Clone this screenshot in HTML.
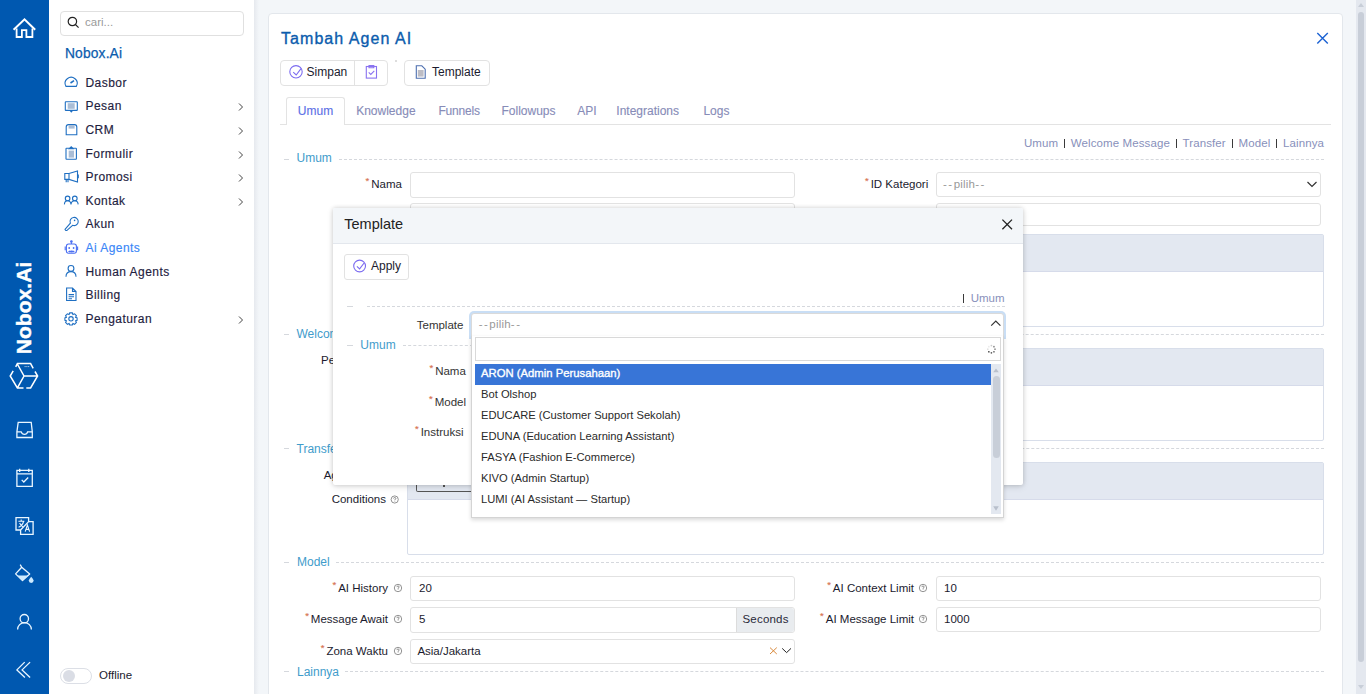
<!DOCTYPE html>
<html><head><meta charset="utf-8">
<style>
*{box-sizing:border-box}
html,body{margin:0;padding:0}
body{width:1366px;height:694px;overflow:hidden;position:relative;background:#f3f6f9;font-family:"Liberation Sans",sans-serif;color:#1e2140}
.a{position:absolute}
.nw{white-space:nowrap}
#bar{left:0;top:0;width:49px;height:694px;background:#0058b0}
#side{left:49px;top:0;width:205px;height:694px;background:#fff}
#shadow{left:254px;top:0;width:5px;height:694px;background:linear-gradient(to right,#e6e9ee,#f3f6f9)}
#sb{left:1356px;top:0;width:10px;height:694px;background:#e4e8ef}
#card{left:268px;top:13px;width:1075px;height:700px;background:#fff;border:1px solid #e3e7ec;border-radius:4px}
.menu{left:85.5px;font-size:12px;letter-spacing:0.45px;color:#1e2140;-webkit-text-stroke:0.15px #1e2140}
.ico{stroke:#1f6fc2;fill:none;stroke-width:1.2}
.chev{left:235px;width:6px;height:6px;border-right:1px solid #555;border-top:1px solid #555;transform:rotate(45deg)}
.lbl{font-size:12px;color:#1b1b2e;text-align:right}
.ast{color:#e07452;font-size:10px}
.inp{background:#fff;border:1px solid #e2e2e2;border-radius:3px}
.legend{font-size:12px;color:#3f9ccb}
.dash{border-top:1px dashed #d5d8dd;height:0}
.tab{font-size:12px;color:#878cb8;-webkit-text-stroke:0.12px #878cb8}
.panel{border:1px solid #d8deea;border-radius:2px;background:#fff}
.phead{background:#e3e8f1;border-bottom:1px solid #d6dbea}
.help{width:9px;height:9px;border:1px solid #777;border-radius:50%;font-size:6px;line-height:7px;text-align:center;color:#777}
.opt{left:481px;font-size:11.2px;color:#2a2a2a}
</style></head><body>
<div id="bar" class="a"></div>
<div id="side" class="a"></div>
<div id="shadow" class="a"></div>
<div id="sb" class="a"></div>
<div id="card" class="a"></div>


<!-- card header -->
<div class="a nw" style="left:281px;top:29.4px;line-height:20px;font-size:16px;letter-spacing:1.05px;color:#0b5cad;-webkit-text-stroke:0.35px #0b5cad">Tambah Agen AI</div>
<svg class="a" style="left:1312px;top:28px" width="22" height="22" viewBox="1312 28 22 22" fill="none" stroke="#1c63d3" stroke-width="1.4"><path d="M1317.3 33.1 L1327.8 43.6 M1327.8 33.1 L1317.3 43.6"/></svg>
<div class="a" style="left:280px;top:60px;width:108px;height:26px;border:1px solid #e2e2e2;border-radius:4px"></div>
<div class="a" style="left:354px;top:61px;width:1px;height:24px;background:#e2e2e2"></div>
<div class="a" style="left:404px;top:60px;width:86px;height:26px;border:1px solid #e2e2e2;border-radius:4px"></div>
<div class="a" style="left:395px;top:60px;width:2px;height:2px;background:#ddd"></div>
<svg class="a" style="left:280px;top:56px" width="220" height="30" viewBox="280 56 220 30" fill="none" stroke-width="1.1">
 <circle cx="296" cy="71.8" r="6.2" stroke="#7c6cf0"/><path d="M293.2 72.2 L296.2 75 L301 68.6" stroke="#7c6cf0"/>
 <rect x="366.3" y="66.5" width="10.2" height="11.6" stroke="#8a73f0"/><path d="M369 66.5 V65.5 H373.8 V66.5 V67.8 H369 Z" stroke="#8a73f0"/><path d="M368.7 72.3 L370.8 74.4 L374.3 70.8" stroke="#8a73f0"/>
 <path d="M416.3 65.8 H421.8 L425.2 69.2 V78.2 H416.3 Z" stroke="#4d6fb0"/><rect x="417.8" y="70" width="5.8" height="6.6" fill="#bcbcc4" stroke="none"/>
</svg>
<div class="a nw" style="left:306.6px;top:62px;line-height:20px;font-size:12px;color:#1b1b2e">Simpan</div>
<div class="a nw" style="left:432px;top:62px;line-height:20px;font-size:12px;color:#1b1b2e">Template</div>

<!-- tabs -->
<div class="a" style="left:280px;top:124px;width:1051px;height:1px;background:#e3e3e3"></div>
<div class="a" style="left:286px;top:97px;width:59px;height:28px;border:1px solid #e3e3e3;border-bottom:none;background:#fff;border-radius:3px 3px 0 0"></div>
<div class="a nw tab" style="left:297.8px;top:101px;line-height:20px;color:#5b6fe6;-webkit-text-stroke:0.12px #5b6fe6">Umum</div>
<div class="a nw tab" style="left:356.2px;top:101px;line-height:20px">Knowledge</div>
<div class="a nw tab" style="left:438.4px;top:101px;line-height:20px;letter-spacing:-0.2px">Funnels</div>
<div class="a nw tab" style="left:501.5px;top:101px;line-height:20px">Followups</div>
<div class="a nw tab" style="left:577.3px;top:101px;line-height:20px">API</div>
<div class="a nw tab" style="left:616.3px;top:101px;line-height:20px">Integrations</div>
<div class="a nw tab" style="left:703.4px;top:101px;line-height:20px">Logs</div>

<!-- anchors -->
<div class="a nw" style="right:42px;top:133.3px;line-height:20px;font-size:11.5px;letter-spacing:0.1px;color:#8890bb">Umum<span style="display:inline-block;width:1.3px;height:9.6px;background:#3a3a3a;margin:0 5.6px 0 5.8px;vertical-align:-1px"></span>Welcome Message<span style="display:inline-block;width:1.3px;height:9.6px;background:#3a3a3a;margin:0 5.6px 0 5.8px;vertical-align:-1px"></span>Transfer<span style="display:inline-block;width:1.3px;height:9.6px;background:#3a3a3a;margin:0 5.6px 0 5.8px;vertical-align:-1px"></span>Model<span style="display:inline-block;width:1.3px;height:9.6px;background:#3a3a3a;margin:0 5.6px 0 5.8px;vertical-align:-1px"></span>Lainnya</div>
<!-- section Umum -->
<div class="a" style="left:284px;top:159px;width:5px;height:1px;background:#d5d8dd"></div>
<div class="a nw legend" style="left:296.5px;top:148.3px;line-height:20px">Umum</div>
<div class="a dash" style="left:339px;top:159px;width:985px"></div>
<div class="a nw" style="right:964px;top:174.2px;line-height:20px;font-size:11.5px;color:#1b1b2e"><span style="color:#d6714f;font-size:9.5px;position:relative;top:-4px;margin-right:2px;-webkit-text-stroke:0.15px #d6714f">*</span>Nama</div><div class="a nw" style="right:437.79999999999995px;top:174.2px;line-height:20px;font-size:11.5px;color:#1b1b2e"><span style="color:#d6714f;font-size:9.5px;position:relative;top:-4px;margin-right:2px;-webkit-text-stroke:0.15px #d6714f">*</span>ID Kategori</div>
<div class="a inp" style="left:410px;top:172px;width:385px;height:26px"></div>
<div class="a inp" style="left:936px;top:172px;width:385px;height:25px"></div>
<div class="a nw" style="left:943px;top:174px;line-height:20px;font-size:11.5px;color:#999;letter-spacing:0.2px"><span style="letter-spacing:1.5px">--</span>pilih<span style="letter-spacing:1.5px">--</span></div>
<svg class="a" style="left:1305px;top:178px" width="14" height="12" viewBox="1305 178 14 12" fill="none" stroke="#333" stroke-width="1.2"><path d="M1307.5 182 L1312 186.5 L1316.5 182"/></svg>
<div class="a inp" style="left:410px;top:203px;width:385px;height:23px"></div>
<div class="a inp" style="left:936px;top:203px;width:385px;height:23px"></div>
<div class="a panel" style="left:407px;top:234px;width:917px;height:93px"></div>
<div class="a phead" style="left:408px;top:235px;width:915px;height:37px"></div>

<!-- Welcome section -->
<div class="a" style="left:284px;top:334px;width:5px;height:1px;background:#d5d8dd"></div>
<div class="a nw legend" style="left:296.5px;top:324px;line-height:20px">Welcome Message</div>
<div class="a dash" style="left:400px;top:334px;width:924px"></div>
<div class="a nw" style="left:321px;top:350px;line-height:20px;font-size:11.5px;color:#1b1b2e">Pesan</div>
<div class="a panel" style="left:407px;top:348px;width:917px;height:93px"></div>
<div class="a phead" style="left:408px;top:349px;width:915px;height:37px"></div>

<!-- Transfer section -->
<div class="a" style="left:284px;top:448px;width:5px;height:1px;background:#d5d8dd"></div>
<div class="a nw legend" style="left:296.5px;top:438.6px;line-height:20px">Transfer</div>
<div class="a dash" style="left:352px;top:448px;width:972px"></div>
<div class="a nw" style="left:323.7px;top:464.8px;line-height:20px;font-size:11.5px;color:#1b1b2e">Agent</div>
<div class="a panel" style="left:407px;top:462px;width:917px;height:93px"></div>
<div class="a phead" style="left:408px;top:463px;width:915px;height:37px"></div>
<div class="a" style="left:416px;top:470px;width:80px;height:21.5px;border:1px solid #555;border-top:none;border-radius:0 0 2px 2px"></div>
<div class="a" style="left:443px;top:485px;width:1.5px;height:1.5px;background:#555"></div>
<div class="a nw" style="right:980px;top:489.1px;line-height:20px;font-size:11.5px;color:#1b1b2e">Conditions</div>
<svg class="a" style="left:390px;top:495px" width="10" height="10" viewBox="0 0 10 10" fill="none" stroke="#777" stroke-width="0.8"><circle cx="4.7" cy="4.5" r="3.6"/><path d="M3.6 3.6 Q3.6 2.5 4.7 2.5 Q5.9 2.5 5.9 3.5 Q5.9 4.3 4.8 4.6 V5.3 M4.8 6.1 V6.6"/></svg>

<!-- Model -->
<div class="a" style="left:284px;top:562px;width:5px;height:1px;background:#d5d8dd"></div>
<div class="a nw legend" style="left:297px;top:552px;line-height:20px">Model</div>
<div class="a dash" style="left:336px;top:562px;width:988px"></div>
<div class="a nw" style="right:978px;top:578.0px;line-height:20px;font-size:11.5px;color:#1b1b2e"><span style="color:#d6714f;font-size:9.5px;position:relative;top:-4px;margin-right:2px;-webkit-text-stroke:0.15px #d6714f">*</span>AI History</div><div class="a nw" style="right:978px;top:608.8px;line-height:20px;font-size:11.5px;color:#1b1b2e"><span style="color:#d6714f;font-size:9.5px;position:relative;top:-4px;margin-right:2px;-webkit-text-stroke:0.15px #d6714f">*</span>Message Await</div><div class="a nw" style="right:978px;top:641.2px;line-height:20px;font-size:11.5px;color:#1b1b2e"><span style="color:#d6714f;font-size:9.5px;position:relative;top:-4px;margin-right:2px;-webkit-text-stroke:0.15px #d6714f">*</span>Zona Waktu</div><div class="a nw" style="right:452px;top:578.0px;line-height:20px;font-size:11.5px;color:#1b1b2e"><span style="color:#d6714f;font-size:9.5px;position:relative;top:-4px;margin-right:2px;-webkit-text-stroke:0.15px #d6714f">*</span>AI Context Limit</div><div class="a nw" style="right:452px;top:608.8px;line-height:20px;font-size:11.5px;color:#1b1b2e"><span style="color:#d6714f;font-size:9.5px;position:relative;top:-4px;margin-right:2px;-webkit-text-stroke:0.15px #d6714f">*</span>AI Message Limit</div>
<div class="a inp" style="left:410px;top:576px;width:385px;height:25px"></div>
<div class="a inp" style="left:410px;top:607px;width:385px;height:26px"></div>
<div class="a" style="left:736px;top:608px;width:58px;height:24px;background:#e9ecef;border-left:1px solid #dcdcdc;border-radius:0 3px 3px 0"></div>
<div class="a nw" style="left:742.5px;top:608.6px;line-height:20px;font-size:11.5px;letter-spacing:0.2px;color:#2a2a3a">Seconds</div>
<div class="a inp" style="left:410px;top:639px;width:385px;height:25px"></div>
<div class="a inp" style="left:936px;top:576px;width:385px;height:25px"></div>
<div class="a inp" style="left:936px;top:607px;width:385px;height:25px"></div>
<div class="a nw" style="left:419px;top:578px;line-height:20px;font-size:11.5px;color:#1b1b2e">20</div>
<div class="a nw" style="left:419px;top:608.6px;line-height:20px;font-size:11.5px;color:#1b1b2e">5</div>
<div class="a nw" style="left:417.4px;top:641.2px;line-height:20px;font-size:11.5px;color:#1b1b2e">Asia/Jakarta</div>
<div class="a nw" style="left:944px;top:578px;line-height:20px;font-size:11.5px;color:#1b1b2e">10</div>
<div class="a nw" style="left:944px;top:608.6px;line-height:20px;font-size:11.5px;color:#1b1b2e">1000</div>
<svg class="a" style="left:764px;top:643px" width="30" height="16" viewBox="764 643 30 16" fill="none" stroke-width="1.1"><path d="M770 647.6 L776.8 654 M776.8 647.6 L770 654" stroke="#d98a3d" stroke-width="1"/><path d="M782.2 648.4 L786.6 652.6 L791 648.4" stroke="#222" stroke-width="1"/></svg>
<div class="a" style="left:284px;top:671px;width:5px;height:1px;background:#d5d8dd"></div>
<div class="a nw legend" style="left:297px;top:661.6px;line-height:20px">Lainnya</div>
<div class="a dash" style="left:345px;top:671px;width:979px"></div>


<svg class="a" style="left:392.9px;top:582.8px" width="10" height="10" viewBox="0 0 10 10" fill="none" stroke="#777" stroke-width="0.8"><circle cx="5" cy="5" r="3.7"/><path d="M3.9 4.1 Q3.9 3 5 3 Q6.2 3 6.2 4 Q6.2 4.8 5.1 5.1 V5.8 M5.1 6.5 V7"/></svg>
<svg class="a" style="left:392.9px;top:614px" width="10" height="10" viewBox="0 0 10 10" fill="none" stroke="#777" stroke-width="0.8"><circle cx="5" cy="5" r="3.7"/><path d="M3.9 4.1 Q3.9 3 5 3 Q6.2 3 6.2 4 Q6.2 4.8 5.1 5.1 V5.8 M5.1 6.5 V7"/></svg>
<svg class="a" style="left:392.9px;top:646.0px" width="10" height="10" viewBox="0 0 10 10" fill="none" stroke="#777" stroke-width="0.8"><circle cx="5" cy="5" r="3.7"/><path d="M3.9 4.1 Q3.9 3 5 3 Q6.2 3 6.2 4 Q6.2 4.8 5.1 5.1 V5.8 M5.1 6.5 V7"/></svg>
<svg class="a" style="left:918.1px;top:582.8px" width="10" height="10" viewBox="0 0 10 10" fill="none" stroke="#777" stroke-width="0.8"><circle cx="5" cy="5" r="3.7"/><path d="M3.9 4.1 Q3.9 3 5 3 Q6.2 3 6.2 4 Q6.2 4.8 5.1 5.1 V5.8 M5.1 6.5 V7"/></svg>
<svg class="a" style="left:918.1px;top:614px" width="10" height="10" viewBox="0 0 10 10" fill="none" stroke="#777" stroke-width="0.8"><circle cx="5" cy="5" r="3.7"/><path d="M3.9 4.1 Q3.9 3 5 3 Q6.2 3 6.2 4 Q6.2 4.8 5.1 5.1 V5.8 M5.1 6.5 V7"/></svg>
<!-- modal -->
<div class="a" style="left:332.5px;top:207.5px;width:690.8px;height:277.2px;background:#fff;box-shadow:0 0 4px rgba(0,0,0,0.16),0 2px 7px rgba(0,0,0,0.1);border-radius:2px"></div>
<div class="a" style="left:332.5px;top:207.5px;width:690.8px;height:36px;background:#f3f6f9;border-bottom:1px solid #e3e7ed;border-radius:2px 2px 0 0"></div>
<div class="a nw" style="left:344.3px;top:214.4px;line-height:20px;font-size:14.5px;color:#222">Template</div>
<svg class="a" style="left:998px;top:215px" width="18" height="18" viewBox="998 215 18 18" fill="none" stroke="#222" stroke-width="1.3"><path d="M1002.4 219.6 L1012 229.2 M1012 219.6 L1002.4 229.2"/></svg>
<div class="a" style="left:344px;top:254px;width:64.5px;height:25.5px;border:1px solid #e2e2e2;border-radius:3px"></div>
<svg class="a" style="left:350px;top:257px" width="20" height="20" viewBox="350 257 20 20" fill="none" stroke="#7c6cf0" stroke-width="1.1"><circle cx="359.6" cy="266" r="5.9"/><path d="M356.9 266.3 L359.6 268.9 L364.1 263"/></svg>
<div class="a nw" style="left:371px;top:256.2px;line-height:20px;font-size:12px;color:#1b1b2e">Apply</div>
<div class="a" style="left:347px;top:306px;width:6px;height:1px;background:#d5d8dd"></div>
<div class="a dash" style="left:367px;top:306px;width:638px"></div>
<div class="a nw" style="right:361.5px;top:288.3px;line-height:20px;font-size:11.5px;color:#8890bb"><span style="display:inline-block;width:1.3px;height:9.2px;background:#3a3a3a;margin:0 6.3px 0 0;vertical-align:-1px"></span>Umum</div>
<div class="a nw" style="right:902.6px;top:315.0px;line-height:20px;font-size:11.5px;color:#333">Template</div>
<div class="a" style="left:347px;top:345px;width:6px;height:1px;background:#d5d8dd"></div>
<div class="a nw legend" style="left:360.3px;top:335.2px;line-height:20px">Umum</div>
<div class="a dash" style="left:403px;top:345px;width:70px"></div>
<div class="a nw" style="right:900.2px;top:360.7px;line-height:20px;font-size:11.5px;color:#333"><span style="color:#d6714f;font-size:9.5px;position:relative;top:-4px;margin-right:2px;-webkit-text-stroke:0.15px #d6714f">*</span>Nama</div><div class="a nw" style="right:900px;top:392.4px;line-height:20px;font-size:11.5px;color:#333"><span style="color:#d6714f;font-size:9.5px;position:relative;top:-4px;margin-right:2px;-webkit-text-stroke:0.15px #d6714f">*</span>Model</div><div class="a nw" style="right:902.5px;top:422.2px;line-height:20px;font-size:11.5px;color:#333"><span style="color:#d6714f;font-size:9.5px;position:relative;top:-4px;margin-right:2px;-webkit-text-stroke:0.15px #d6714f">*</span>Instruksi</div>
<!-- select with dropdown -->
<div class="a" style="left:471px;top:312.8px;width:533px;height:24.5px;border:1px solid #dadada;border-radius:3px 3px 0 0;background:#fff;box-shadow:0 0 0 2px #c9def5"></div>
<div class="a nw" style="left:478.7px;top:314.2px;line-height:20px;font-size:11.5px;color:#999;letter-spacing:0.2px"><span style="letter-spacing:1.5px">--</span>pilih<span style="letter-spacing:1.5px">--</span></div>
<svg class="a" style="left:988px;top:317px" width="16" height="12" viewBox="988 317 16 12" fill="none" stroke="#333" stroke-width="1.2"><path d="M991.2 325.6 L995.8 321 L1000.4 325.6"/></svg>
<div class="a" style="left:471px;top:336px;width:533px;height:181.5px;background:#fff;border:1px solid #d4d4d4;border-top:none;box-shadow:0 2px 4px rgba(0,0,0,0.15)"></div>
<div class="a" style="left:475px;top:337.2px;width:526px;height:23.5px;border:1px solid #d9d9d9"></div>
<svg class="a" style="left:985px;top:343px" width="12" height="12" viewBox="0 0 12 12" fill="#333"><circle cx="6.40" cy="2.60" r="0.85" fill-opacity="0.25"/><circle cx="8.95" cy="3.65" r="0.85" fill-opacity="0.6"/><circle cx="10.00" cy="6.20" r="0.85" fill-opacity="0.55"/><circle cx="8.95" cy="8.75" r="0.85" fill-opacity="0.8"/><circle cx="6.40" cy="9.80" r="0.85" fill-opacity="0.8"/><circle cx="3.85" cy="8.75" r="0.85" fill-opacity="0.95"/><circle cx="2.80" cy="6.20" r="0.85" fill-opacity="0.15"/><circle cx="3.85" cy="3.65" r="0.85" fill-opacity="0.1"/></svg>
<div class="a" style="left:475px;top:364px;width:516px;height:21px;background:#3875d7"></div>
<div class="a nw opt" style="top:363.4px;line-height:20px;font-size:11.3px;color:#fff;-webkit-text-stroke:0.35px #fff">ARON (Admin Perusahaan)</div>
<div class="a nw opt" style="top:384.4px;line-height:20px;">Bot Olshop</div>
<div class="a nw opt" style="top:405.4px;line-height:20px;">EDUCARE (Customer Support Sekolah)</div>
<div class="a nw opt" style="top:426.4px;line-height:20px;">EDUNA (Education Learning Assistant)</div>
<div class="a nw opt" style="top:447.4px;line-height:20px;">FASYA (Fashion E-Commerce)</div>
<div class="a nw opt" style="top:468.4px;line-height:20px;">KIVO (Admin Startup)</div>
<div class="a nw opt" style="top:489.4px;line-height:20px;">LUMI (AI Assistant — Startup)</div>

<div class="a" style="left:991px;top:364px;width:10px;height:150px;background:#e3e8f0"></div>
<div class="a" style="left:992.5px;top:376px;width:7px;height:81.5px;background:#c8ced8;border-radius:4px"></div>
<svg class="a" style="left:991px;top:364px" width="10" height="150" viewBox="0 0 10 150" fill="#c8ced8"><path d="M2.2 8.2 L5 4.4 L7.8 8.2 Z M2.2 142.2 L5 146.8 L7.8 142.2 Z" fill="#b9c0cc"/></svg>

<!-- page scrollbar -->
<div class="a" style="left:1358px;top:12px;width:6px;height:649.5px;background:#c8ced8;border-radius:3px"></div>
<svg class="a" style="left:1356px;top:0" width="10" height="694" viewBox="0 0 10 694" fill="#c8ced8"><path d="M2 7 L5 3 L8 7 Z M2 685 L5 689 L8 685 Z"/></svg>

<!-- blue bar icons -->
<svg class="a" style="left:0;top:0" width="49" height="694" viewBox="0 0 49 694" fill="none" stroke="#fff" stroke-width="1.6">
 <path d="M13.6 29.8 L24.5 19.3 L35.2 29.8" stroke-width="2"/><path d="M16.6 28.6 V37 H21.9 V30.2 H26.4 V37 H32.4 V28.6" stroke-width="1.8"/>
 <g stroke="#eaf6ff" stroke-width="1.3">
 <path d="M18.2 422.3 H31.2 L32.3 431.9 V437.5 H16.9 V431.9 Z M16.9 431.9 H21.2 Q22 434.4 24.5 434.4 Q27 434.4 27.6 431.9 H32.3"/>
 <path d="M16.9 470.3 H32.3 V486.3 H16.9 Z M16.9 473.8 H32.3 M19.7 468.8 V472 M28.8 468.8 V472 M21.7 479.9 L23.8 482 L28.2 477.5"/>
 <g transform="translate(10 511)"><path d="M18.6 10.6 V6.7 H6 V19 H10.6 M18 10.6 H23.1 V23.3 H10.6 V19 M18.4 10.9 L10.8 18.8"/><path d="M8.4 10.2 H14.4 M11.2 8.6 V10.2 M13.6 10.4 Q12.6 14.6 8.6 16.2 M9.6 12 Q11 14.8 13 15.8" stroke-width="1.1"/><path d="M15.2 20.6 L17.4 14 L19.6 20.6 M16 18.4 H18.8" stroke-width="1.1"/></g>
 <path d="M20.2 564.6 L21.7 567.2 M21.7 567.2 L29.7 573.9 L22.5 580.6 L15.6 573.9 Z" stroke-linejoin="round"/>
 <path d="M17.3 575.4 H28 L22.5 580.4 Z" fill="#cdeaff" stroke="none"/>
 <path d="M31.2 576.8 Q33.6 579.6 33.6 580.6 A2.4 2.4 0 0 1 28.8 580.6 Q28.8 579.6 31.2 576.8 Z" fill="#cdeaff" stroke="none"/>
 <circle cx="24.3" cy="618.7" r="4.2"/>
 <path d="M17.6 629.5 A6.8 6.8 0 0 1 31.4 629.5"/>
 <path d="M24.7 662.1 L16.9 669.9 L24.9 677.5 M30.1 662.1 L22.1 669.9 L30.1 677.5"/>
 </g>
 <path d="M13.2 370.9 L10.2 376 L17.4 387.9 H23.5 M26.3 387.9 H30.6 L37.6 376 L35 371.5 M33.2 368.3 L30.6 363.6 H17.4 L15.7 366.8 M17.6 364.5 L24 376 L17.4 387.9 M24 376 H37" stroke-width="1.5"/>
 <path d="M24.6 366.6 h1 M26.4 366.6 h1 M28.2 366.6 h1" stroke-width="0.8"/>
</svg>
<div class="a nw" style="left:24px;top:307.6px;transform:translate(-50%,-50%) rotate(-90deg);font-size:21.1px;font-weight:bold;color:#fff;line-height:20px;-webkit-text-stroke:0.4px #fff">Nobox.Ai</div>

<!-- sidebar panel -->
<div class="a inp" style="left:60px;top:11px;width:184px;height:25px;border-color:#e0e0e0;border-radius:4px"></div>
<svg class="a" style="left:66px;top:16px" width="14" height="14" viewBox="0 0 14 14" fill="none" stroke="#222" stroke-width="1.2"><circle cx="6.4" cy="5.5" r="4.2"/><path d="M9.4 8.5 L12.6 11.6"/></svg>
<div class="a nw" style="left:85px;top:14px;line-height:16px;font-size:11.5px;color:#9a9a9a">cari...</div>
<div class="a nw" style="left:65px;top:44px;line-height:20px;font-size:13.8px;letter-spacing:0.15px;color:#0b5cad;-webkit-text-stroke:0.25px #0b5cad">Nobox.Ai</div>

<div class="a nw menu" style="top:73px;line-height:20px">Dasbor</div>
<div class="a nw menu" style="top:96px;line-height:20px">Pesan</div>
<div class="a nw menu" style="top:120px;line-height:20px">CRM</div>
<div class="a nw menu" style="top:144px;line-height:20px">Formulir</div>
<div class="a nw menu" style="top:167px;line-height:20px">Promosi</div>
<div class="a nw menu" style="top:191px;line-height:20px">Kontak</div>
<div class="a nw menu" style="top:214px;line-height:20px">Akun</div>
<div class="a nw menu" style="top:238px;line-height:20px;color:#3a86f7;-webkit-text-stroke:0.15px #3a86f7">Ai Agents</div>
<div class="a nw menu" style="top:262px;line-height:20px">Human Agents</div>
<div class="a nw menu" style="top:285px;line-height:20px">Billing</div>
<div class="a nw menu" style="top:309px;line-height:20px">Pengaturan</div>
<svg class="a" style="left:235.8px;top:0.5px" width="10" height="340" viewBox="0 0 10 340" fill="none" stroke="#444" stroke-width="1">
 <path d="M3 102.5 L6.5 106 L3 109.5 M3 126.5 L6.5 130 L3 133.5 M3 150.5 L6.5 154 L3 157.5 M3 173.5 L6.5 177 L3 180.5 M3 197.5 L6.5 201 L3 204.5 M3 315.5 L6.5 319 L3 322.5"/>
</svg>
<svg class="a" style="left:60px;top:70px" width="24" height="262" viewBox="60 70 24 262" fill="none" stroke="#1f6fc2" stroke-width="1.1">
 <path d="M66 86.4 A6 6 0 1 1 76.3 86.4 Z"/><path d="M70.5 83 L74 80.6" stroke-width="1.6"/>
 <rect x="65.3" y="101.8" width="12" height="8.6" rx="0.5"/><rect x="67.7" y="103.2" width="7" height="5.6" fill="#a9bdd6" stroke="none"/><path d="M70 110.4 L71.3 111.9 L72.6 110.4"/>
 <path d="M66.2 134.8 V127 Q66.2 124.6 68.5 124.6 H74.6 Q76.8 124.6 76.8 127 V134.8 Z"/><rect x="68.6" y="125" width="6" height="3.6" fill="#a9bdd6" stroke="none"/>
 <rect x="66" y="148.3" width="10.4" height="11" rx="0.5"/><path d="M69.2 148.8 L71.2 146.8 L73.2 148.8 Z"/><rect x="68.7" y="150.6" width="5.3" height="7" fill="#a9bdd6" stroke="none"/>
 <path d="M64.8 173.5 H69 L77.5 170.9 V182 L69 179.4 H64.8 Z M69 173.5 V179.4 M66.2 179.4 V182.3 M68 179.4 V182.3 M77.5 175 h0.8 v2.6 h-0.8"/>
 <circle cx="67.6" cy="198.4" r="2.3"/><circle cx="74.8" cy="198.4" r="2.3"/><path d="M64.4 204.4 Q64.6 200.8 67.6 200.8 Q70.6 200.8 71 204.4 Q71.4 200.8 74.8 200.8 Q77.8 200.8 78.2 204.4"/>
 <path d="M70.4 223.2 A4.1 4.1 0 1 1 72.6 225.3 L67 230.4 Q65.6 231 65 229.4 Z"/><circle cx="74.6" cy="220.4" r="0.8" fill="#1f6fc2" stroke="none"/>
 <g stroke="#4b6ff2"><rect x="66.4" y="244" width="10" height="9.2" rx="2.2"/><path d="M71.4 244 V242.2 M65.2 246.6 V250.2 M77.6 246.6 V250.2 M68.4 251.5 H74.4 M69.9 250.5 V252.5 M71.4 250.5 V252.5 M72.9 250.5 V252.5"/><circle cx="71.4" cy="241.5" r="0.8" fill="#4b6ff2"/><circle cx="69.2" cy="248" r="0.9" fill="#4b6ff2" stroke="none"/><circle cx="73.6" cy="248" r="0.9" fill="#4b6ff2" stroke="none"/></g>
 <circle cx="71" cy="268.4" r="2.9"/><path d="M66 276.7 Q66 271.6 71 271.6 Q76 271.6 76 276.7"/>
 <path d="M66.6 288 H72.5 L76 291.4 V300.5 H66.6 Z M72.5 288 V291.4 H76 M68.6 294.6 H74 M68.6 296.8 H74 M68.6 298.7 H72"/>
 <circle cx="71" cy="318.8" r="2.2"/><path d="M69.7 312.9 H72.3 L72.9 314.5 L74.6 313.8 L76.4 315.6 L75.6 317.3 L77.1 317.8 V320.3 L75.6 320.8 L76.4 322.5 L74.6 324.3 L72.9 323.5 L72.3 325 H69.7 L69.1 323.5 L67.4 324.3 L65.6 322.5 L66.4 320.8 L64.9 320.3 V317.8 L66.4 317.3 L65.6 315.6 L67.4 313.8 L69.1 314.5 Z"/>
</svg>
<!-- toggle -->
<div class="a" style="left:60px;top:668px;width:32px;height:16px;border:1px solid #dcdfe6;border-radius:8px;background:#fff"></div>
<div class="a" style="left:63px;top:670px;width:12px;height:12px;border-radius:50%;background:#dadde5"></div>
<div class="a nw" style="left:99px;top:667px;line-height:16px;font-size:11.5px;color:#1b1b2e">Offline</div>

</body></html>
